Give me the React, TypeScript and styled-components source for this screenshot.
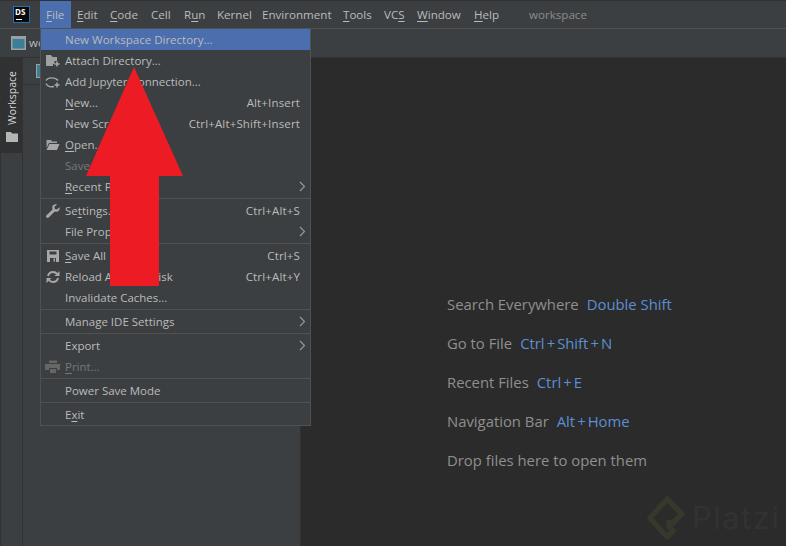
import React from "react";
import styled, { createGlobalStyle } from "styled-components";

const Global = createGlobalStyle`
  html, body { margin: 0; padding: 0; background: #3c3f41; overflow: hidden; }
  #root { width: 786px; height: 546px; }
  * { box-sizing: border-box; }
`;
const FONT = `"Open Sans", "Noto Sans", "Liberation Sans", sans-serif`;

const Win = styled.div`
  position: relative; width: 786px; height: 546px; overflow: hidden;
  display: flex; flex-direction: column; background: #3c3f41;
  font-family: ${FONT}; font-size: 11.5px; color: #bbbbbb;
`;
const TitleBar = styled.div`
  height: 29px; flex: none; display: flex; align-items: stretch;
  border-top: 1px solid #2f3133; border-bottom: 1px solid #515151; padding-left: 13px;
`;
const Logo = styled.div`
  width: 17px; height: 17px; margin: 5px 10px 0 0; flex: none; background: #0a0a0a;
  border: 1px solid #2470b3; position: relative; color: #fff; font-size: 8px; font-weight: 700;
  line-height: 10px; padding-left: 1px;
  &::after { content: ""; position: absolute; left: 2px; bottom: 2px; width: 6px; height: 1px; background: #fff; }
`;
const MenuItem = styled.div<{ $active?: boolean; $w: number }>`
  width: ${p => p.$w}px; flex: none; padding-left: 6px; display: flex; align-items: center; white-space: pre; font-size: 11.6px;
  background: ${p => (p.$active ? "#4b6eaf" : "transparent")};
`;
const TitleText = styled.div`
  margin-left: 17px; display: flex; align-items: center; color: #8c8c8c; font-size: 11.6px;
`;
const NavBar = styled.div`
  height: 29px; flex: none; display: flex; align-items: center; gap: 3px; padding-left: 11px;
  border-bottom: 1px solid #323232; padding-bottom: 1px;
`;
const Body = styled.div`flex: 1; display: flex; min-height: 0;`;
const Stripe = styled.div`
  width: 23px; flex: none; border-right: 1px solid #323232; border-left: 1px solid #323232;
`;
const StripeTab = styled.div`
  height: 95px; background: #2f3133; display: flex; flex-direction: column; align-items: center;
  justify-content: flex-end; gap: 6px; padding: 0 0 11px; color: #d8d8d8;
`;
const Vertical = styled.span`
  writing-mode: vertical-rl; transform: rotate(180deg); font-size: 10.5px; line-height: 14px;
`;
const Panel = styled.div`
  width: 278px; flex: none; background: #3c3f41; border-right: 1px solid #323232;
`;
const PanelHead = styled.div`
  height: 27px; border-bottom: 1px solid #323232; display: flex; align-items: center; padding-left: 13px;
`;
const Editor = styled.div`
  flex: 1; background: #2b2b2b; display: flex; flex-direction: column; gap: 18px;
  padding: 236px 0 0 146px; font-size: 14.85px; color: #8f8f8f; position: relative;
`;
const Hint = styled.div`display: flex; gap: 8px; line-height: 21px; height: 21px; white-space: pre;`;
const Key = styled.span`color: #5c8fd3;`;
const Plus = styled.span`margin: 0 2px;`;
const Watermark = styled.div`
  position: absolute; left: 346px; top: 438px; display: flex; align-items: center; gap: 7px;
  color: #323232; font-size: 31px; font-family: "Inter", ${FONT}; line-height: 44px; letter-spacing: 1.5px;
`;
const Menu = styled.div`
  position: absolute; left: 40px; top: 28px; width: 271px; height: 398px;
  background: #3c3f41; border: 1px solid #515151; padding: 0;
`;
const Row = styled.div<{ $active?: boolean; $dim?: boolean }>`
  height: 21px; display: flex; align-items: center; position: relative; padding: 0 10px 0 24px;
  background: ${p => (p.$active ? "#4b6eaf" : "transparent")};
  color: ${p => (p.$dim ? "#777777" : "#bbbbbb")}; white-space: pre;
`;
const Short = styled.span`margin-left: auto; letter-spacing: 0.15px;`;
const IconSlot = styled.span`
  position: absolute; left: 4px; top: 3px; width: 16px; height: 16px; display: flex; color: #a8a8a8;
`;
const Sub = styled.svg`position: absolute; right: 4px; top: 5px;`;
const Sep = styled.div`height: 3px; display: flex; align-items: center; &::after { content: ""; flex: 1; height: 1px; background: #515151; }`;
const Arrow = styled.svg`position: absolute; left: 80px; top: 60px;`;

const U = styled.u`text-underline-offset: 2px; text-decoration-thickness: 1px;`;

const Chevron = () => (
  <Sub width="7" height="11" viewBox="0 0 7 11"><path d="M1 1l4.5 4.5L1 10" fill="none" stroke="#9a9a9a" strokeWidth="1.1" /></Sub>
);
const FolderPlus = () => (
  <svg width="16" height="16" viewBox="0 0 16 16"><path d="M1 2h5l1.5 2H12v4H9.5v3H8v2H1z" fill="#a0a0a0" /><path d="M12 8.5v5M9.5 11h5" stroke="#a8a8a8" strokeWidth="1.5" /></svg>
);
const Jupyter = () => (
  <svg width="16" height="16" viewBox="0 0 16 16" fill="none" stroke="#a8a8a8" strokeWidth="1.4"><path d="M1 6.5C3 3 10 3 13 6.5M1 9.5c1.5 3 5 3.6 8 3" /><path d="M12 8.5v5M9.5 11h5" strokeWidth="1.5" /></svg>
);
const FolderOpen = () => (
  <svg width="16" height="16" viewBox="0 0 16 16"><path d="M1.5 3h4.5l1 1.5h5V6H4L1.5 11z" fill="#a0a0a0" /><path d="M4.5 7h10L12 13H1.5z" fill="#a8a8a8" /></svg>
);
const Wrench = () => (
  <svg width="16" height="16" viewBox="0 0 16 16"><path d="M14.5 4.2l-2.6 2.3-2-.5-.6-2L12 1.5C10 .8 8 1.6 7.4 3.4 7 4.6 7.2 5.6 7.6 6.4L1.5 12.2c-.7.7-.7 1.6 0 2.2.7.7 1.6.6 2.2 0l6-6c1 .4 2 .5 3 0 1.7-.8 2.4-2.5 1.8-4.2z" fill="#a8a8a8" /></svg>
);
const Floppy = () => (
  <svg width="16" height="16" viewBox="0 0 16 16"><path d="M2 2h12v12H2z" fill="#a8a8a8" /><path d="M4.5 3.5h7v3h-7zM5 10h6v4H5z" fill="#3c3f41" /><path d="M8.5 10.5h1.5v3H8.5z" fill="#a8a8a8" /></svg>
);
const Reload = () => (
  <svg width="16" height="16" viewBox="0 0 16 16" fill="none" stroke="#a8a8a8" strokeWidth="2"><path d="M3 7c.6-2.4 2.6-4 5-4 1.8 0 3.2.8 4 2" /><path d="M13 9c-.6 2.4-2.6 4-5 4-1.8 0-3.2-.8-4-2" /><path d="M14.5 2v5h-5z" fill="#a8a8a8" stroke="none" /><path d="M1.5 14V9h5z" fill="#a8a8a8" stroke="none" /></svg>
);
const Printer = () => (
  <svg width="16" height="16" viewBox="-1 0 16 16"><path d="M3 1.5h8V4H3zM-1 5h15v6h-3V9H3v2H-1zM4 10h6v4H4z" fill="#666" /></svg>
);

export default function App() {
  return (
    <Win>
      <Global />
      <TitleBar>
        <Logo>DS</Logo>
        <MenuItem $w={31} $active><span><U>F</U>ile</span></MenuItem>
        <MenuItem $w={33}><span><U>E</U>dit</span></MenuItem>
        <MenuItem $w={41}><span><U>C</U>ode</span></MenuItem>
        <MenuItem $w={33}>Cell</MenuItem>
        <MenuItem $w={33}><span>R<U>u</U>n</span></MenuItem>
        <MenuItem $w={45}>Kernel</MenuItem>
        <MenuItem $w={81}>Environment</MenuItem>
        <MenuItem $w={41}><span><U>T</U>ools</span></MenuItem>
        <MenuItem $w={33}><span>VC<U>S</U></span></MenuItem>
        <MenuItem $w={57}><span><U>W</U>indow</span></MenuItem>
        <MenuItem $w={44}><span><U>H</U>elp</span></MenuItem>
        <TitleText>workspace</TitleText>
      </TitleBar>
      <NavBar>
        <svg width="15" height="14" viewBox="0 0 15 14"><rect x="0.75" y="0.75" width="13.5" height="12.5" fill="#3a7f96" stroke="#9aa0a3" strokeWidth="1.5" /><rect x="1" y="1" width="13" height="2" fill="#9aa0a3" /></svg>
        <span>workspace</span>
      </NavBar>
      <Body>
        <Stripe>
          <StripeTab>
            <Vertical>Workspace</Vertical>
            <svg width="12" height="11" viewBox="0 0 12 11"><path d="M0 1h5l1 1.5h6V11H0z" fill="#b5b5b5" /></svg>
          </StripeTab>
        </Stripe>
        <Panel>
          <PanelHead>
            <svg width="14" height="14" viewBox="0 0 14 14"><rect x="0.5" y="0.5" width="13" height="13" fill="#3a7f96" stroke="#9aa0a3" /></svg>
          </PanelHead>
        </Panel>
        <Editor>
          <Hint>Search Everywhere<Key>Double Shift</Key></Hint>
          <Hint>Go to File<Key>Ctrl<Plus>+</Plus>Shift<Plus>+</Plus>N</Key></Hint>
          <Hint>Recent Files<Key>Ctrl<Plus>+</Plus>E</Key></Hint>
          <Hint>Navigation Bar<Key>Alt<Plus>+</Plus>Home</Key></Hint>
          <Hint>Drop files here to open them</Hint>
          <Watermark>
            <svg width="38" height="44" viewBox="0 0 38 44" fill="none" stroke="#35382b" strokeWidth="5.5" strokeLinejoin="round"><path d="M28 33l-8 8L3 22 20 3l15 15-13 13v-7" /></svg>
            Platzi
          </Watermark>
        </Editor>
      </Body>
      <Menu>
        <Row $active>New Workspace Directory...</Row>
        <Row><IconSlot><FolderPlus /></IconSlot>Attach Directory...</Row>
        <Row><IconSlot><Jupyter /></IconSlot>Add Jupyter Connection...</Row>
        <Row><span><U>N</U>ew...</span><Short>Alt+Insert</Short></Row>
        <Row>New Scratch File<Short>Ctrl+Alt+Shift+Insert</Short></Row>
        <Row><IconSlot><FolderOpen /></IconSlot><span><U>O</U>pen...</span></Row>
        <Row $dim>Save As...</Row>
        <Row><span><U>R</U>ecent Projects</span><Chevron /></Row>
        <Sep />
        <Row><IconSlot><Wrench /></IconSlot><span>Se<U>t</U>tings...</span><Short>Ctrl+Alt+S</Short></Row>
        <Row>File Properties<Chevron /></Row>
        <Sep />
        <Row><IconSlot><Floppy /></IconSlot><span><U>S</U>ave All</span><Short>Ctrl+S</Short></Row>
        <Row><IconSlot><Reload /></IconSlot>Reload All from Disk<Short>Ctrl+Alt+Y</Short></Row>
        <Row>Invalidate Caches...</Row>
        <Sep />
        <Row>Manage IDE Settings<Chevron /></Row>
        <Sep />
        <Row>Export<Chevron /></Row>
        <Row $dim><IconSlot><Printer /></IconSlot><span><U>P</U>rint...</span></Row>
        <Sep />
        <Row>Power Save Mode</Row>
        <Sep />
        <Row><span>E<U>x</U>it</span></Row>
      </Menu>
      <Arrow width="110" height="230" viewBox="0 0 110 230"><path d="M54 7L6 116h24v110h49V116h24z" fill="#ed1c24" /></Arrow>
    </Win>
  );
}
